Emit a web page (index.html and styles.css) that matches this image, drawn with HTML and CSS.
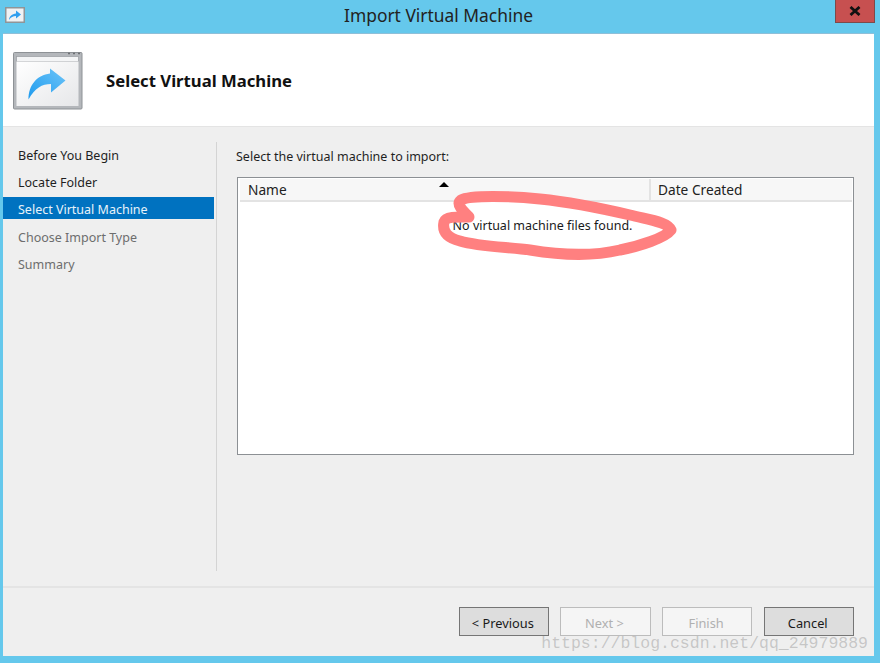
FILE: index.html
```html
<!DOCTYPE html>
<html lang="en">
<head>
<meta charset="utf-8">
<title>Import Virtual Machine</title>
<link rel="stylesheet" href="styles.css">
</head>
<body>
<div class="window">
  <div class="titlebar">
    <svg class="title-icon" width="20" height="16" viewBox="0 0 20 16">
      <rect x="0.750" y="0.750" width="18.500" height="14.500" fill="#f0f2f4" stroke="#8f9598" stroke-width="1.500"/>
      <path d="M4 13C4.500 9 7 7 11 6.500V3.500L16 7.500L11 11.500V9C8 9 6 10 4 13Z" fill="#2f9fef"/>
    </svg>
    <div class="title">Import Virtual Machine</div>
    <div class="close"><svg width="14" height="10" viewBox="0 0 14 10"><path d="M2.500 1L11.500 9M11.500 1L2.500 9" stroke="#111" stroke-width="2.800"/></svg></div>
  </div>
  <div class="client">
    <header class="header">
      <svg class="header-icon" width="70" height="58" viewBox="0 0 70 58">
        <defs>
          <linearGradient id="pane" x1="0" y1="0" x2="1" y2="1"><stop offset="0" stop-color="#ffffff"/><stop offset="1" stop-color="#e6e7e9"/></linearGradient>
          <linearGradient id="arrow" x1="0" y1="1" x2="1" y2="0"><stop offset="0" stop-color="#1f9bee"/><stop offset="1" stop-color="#6cc4f8"/></linearGradient>
        </defs>
        <rect x="0.500" y="0.500" width="68.500" height="56.500" rx="1" fill="#b4b7bb" stroke="#8e9296"/>
        <rect x="3.500" y="4.500" width="62" height="5" fill="#f4f5f6" stroke="#a0a3a7" stroke-width="0.800"/>
        <rect x="3.500" y="9.500" width="62" height="44.500" fill="url(#pane)"/>
        <path d="M55 1.500h2M60 1.500h2M65 1.500h2" stroke="#6d7073" stroke-width="1.500"/>
        <path d="M15.500 47.500C15.500 33 24 23 37 21.500V16.500L52.500 28.500L38 40.500V32C29 32 22 36 15.500 47.500Z" fill="url(#arrow)"/>
      </svg>
      <h1 class="heading">Select Virtual Machine</h1>
    </header>
    <div class="body">
      <nav class="nav">
        <ul class="steps">
          <li class="step">Before You Begin</li>
          <li class="step">Locate Folder</li>
          <li class="step step-active">Select Virtual Machine</li>
          <li class="step step-off">Choose Import Type</li>
          <li class="step step-off">Summary</li>
        </ul>
      </nav>
      <main class="main">
        <p class="prompt">Select the virtual machine to import:</p>
        <div class="list">
          <div class="list-head">
            <div class="col col-name">Name<span class="sort"></span></div>
            <div class="col col-date">Date Created</div>
          </div>
          <div class="list-empty">No virtual machine files found.</div>
        </div>
      </main>
    </div>
    <footer class="footer">
      <button class="btn btn-on" type="button">&lt; Previous</button>
      <button class="btn" type="button" disabled>Next &gt;</button>
      <button class="btn" type="button" disabled>Finish</button>
      <button class="btn btn-on" type="button">Cancel</button>
    </footer>
  </div>
</div>
<svg class="scribble" width="880" height="663" viewBox="0 0 880 663">
  <path d="M469 217C460 217 446 216 444 222C442 232 448 238 460 241C480 247 510 247 530 250C560 255 590 257 620 250C640 246 665 238 671 230C668 222 650 220 630 215C600 208 570 202 540 199C510 196 470 195 461 200C456 204 462 210 469 217" fill="none" stroke="#ff8080" stroke-width="11" stroke-linecap="round" stroke-linejoin="round"/>
</svg>
<div class="watermark">https://blog.csdn.net/qq_24979889</div>
</body>
</html>
```

FILE: styles.css
```css
* { box-sizing: border-box; }
html, body { margin: 0; padding: 0; }
body {
  width: 880px;
  height: 663px;
  overflow: hidden;
  position: relative;
  font-family: "Noto Sans", "Open Sans", sans-serif;
  font-size: 12.500px;
  color: #1a1a1a;
  background: #65c8ec;
}
.window {
  display: flex;
  flex-direction: column;
  height: 663px;
  padding: 0 6px 7px 3px;
}
.titlebar {
  position: relative;
  height: 34px;
  flex: none;
  display: flex;
  align-items: center;
  justify-content: center;
}
.title-icon { position: absolute; left: 2px; top: 7px; }
.title { font-size: 17.400px; color: #222; margin-top: -5px; }
.close {
  position: absolute;
  right: -1px;
  top: 0;
  width: 40px;
  height: 23px;
  background: #c75050;
  border: 1px solid #7d4a4a;
  border-top: 0;
  display: flex;
  align-items: center;
  justify-content: center;
}
.client {
  flex: 1;
  display: flex;
  flex-direction: column;
  background: #efefef;
  box-shadow: 0 -1px 0 #8fbfd8;
  min-height: 0;
}
.header {
  height: 93px;
  flex: none;
  background: #fff;
  border-bottom: 1px solid #e4e4e4;
  display: flex;
  align-items: center;
  padding: 0 0 0 10px;
}
.header-icon { flex: none; margin-top: 2px; }
.heading { margin: 0 0 0 23px; font-size: 16.700px; font-weight: 700; color: #111; }
.body { flex: 1; display: flex; min-height: 0; }
.nav {
  width: 213.500px;
  flex: none;
  margin: 15px 0 15px 0;
  border-right: 1.500px solid #d4d4d4;
}
.steps { list-style: none; margin: -1px 0 0; padding: 0 1.500px 0 0; display: flex; flex-direction: column; }
.step { height: 27px; padding: 2px 0 0 15px; display: flex; align-items: center; color: #1f1f1f; }
.step-active { background: #0072c0; color: #e8f2fa; height: 22px; margin: 2px 0 4px; }
.step-off { color: #6d6d6d; }
.main { flex: 1; padding: 20px 20px 0 20.500px; min-width: 0; }
.prompt { margin: 0 0 0 -1px; height: 30px; line-height: 20px; color: #1f1f1f; }
.list {
  height: 278px;
  background: #fff;
  border: 1px solid #8c9094;
  padding: 1px 1px 0 2px;
}
.list-head {
  display: flex;
  height: 23px;
  background: #f7f7f7;
  border-bottom: 2px solid #e3e3e3;
}
.col { position: relative; padding-left: 7px; line-height: 21px; font-size: 13.700px; color: #222; }
.col-name { width: 411px; padding-left: 8px; border-right: 2px solid #e3e3e3; }
.col-date { flex: 1; }
.sort {
  position: absolute;
  left: 199px;
  top: 3px;
  width: 0;
  height: 0;
  border-left: 5px solid transparent;
  border-right: 5px solid transparent;
  border-bottom: 5px solid #000;
}
.list-empty { text-align: center; line-height: 20px; padding: 14px 7px 0 0; color: #1a1a1a; }
.footer {
  height: 70px;
  flex: none;
  border-top: 2px solid #e4e4e4;
  display: flex;
  justify-content: flex-end;
  gap: 11.170px;
  padding: 19px 20px 0 0;
}
.btn {
  width: 90.500px;
  height: 29px;
  padding: 2px 2px 0 0;
  font-family: inherit;
  font-size: 12.800px;
  color: #b0b0b0;
  background: #f5f5f5;
  border: 1px solid #bcbcbc;
}
.btn-on { background: #dddddd; border: 1px solid #757575; color: #1a1a1a; }
.scribble { position: absolute; left: 0; top: 0; pointer-events: none; }
.watermark {
  position: absolute;
  right: 12px;
  top: 634px;
  font-family: "Liberation Mono", monospace;
  font-size: 16.500px;
  line-height: 20px;
  color: rgba(120, 120, 120, 0.35);
  white-space: nowrap;
}
```
